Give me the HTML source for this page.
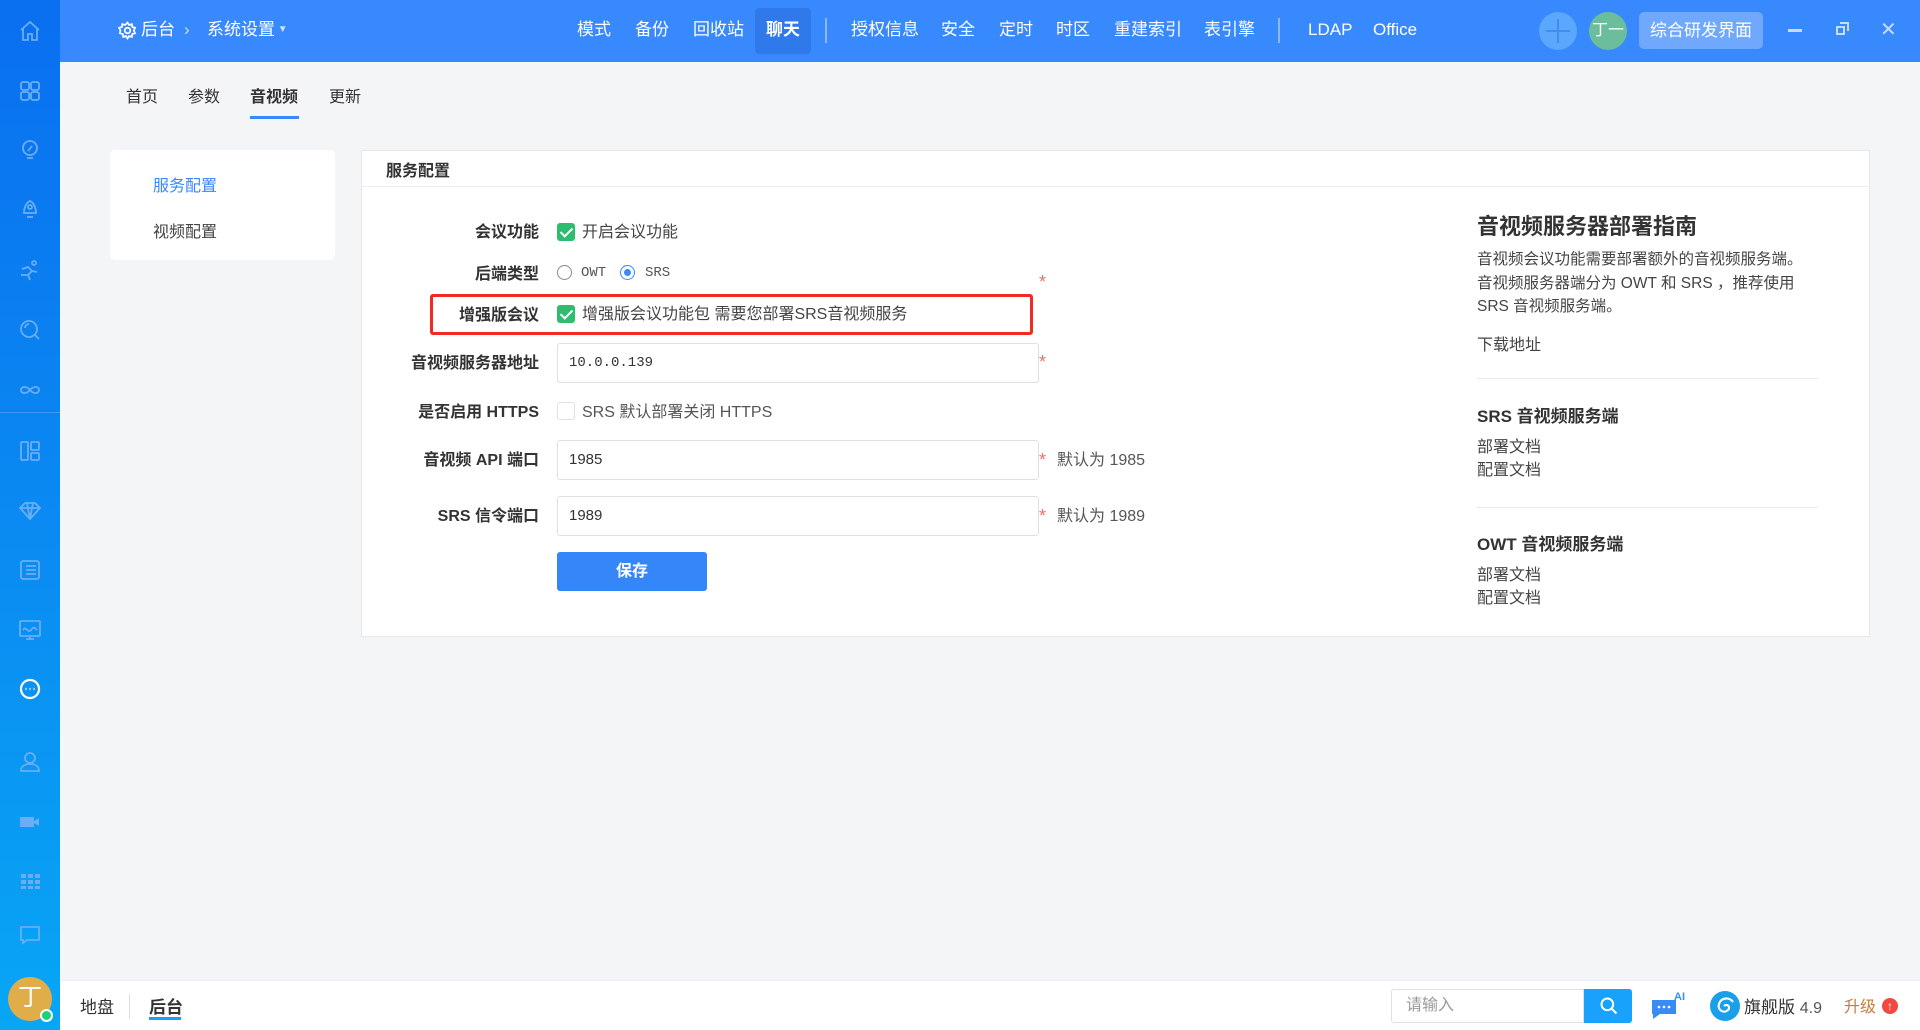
<!DOCTYPE html>
<html><head><meta charset="utf-8"><style>
*{box-sizing:border-box;margin:0;padding:0}
body{width:1920px;height:1030px;overflow:hidden;background:#f4f5f7;font-family:"Liberation Sans","Noto Sans CJK SC",sans-serif;color:#333;position:relative}
.a{position:absolute}
#side{left:0;top:0;width:60px;height:1030px;background:linear-gradient(#0a6ff0,#0a8ff2 60%,#08a6f5)}
#side svg{position:absolute;left:18px;width:24px;height:24px;fill:none;stroke:#6aaef8;stroke-width:1.8}
#hdr{left:60px;top:0;width:1860px;height:62px;background:#3888fe;color:#fff}
.m{position:absolute;top:0;line-height:60px;font-size:17px;color:#fff;white-space:nowrap}
.lbl{position:absolute;right:1381px;font-size:16px;font-weight:bold;color:#333;text-align:right;white-space:nowrap;line-height:20px;margin-top:2px}
.inp{position:absolute;left:557px;width:482px;height:40px;border:1px solid #dcdfe6;border-radius:3px;background:#fff;padding-left:11px;line-height:38px;font-size:15px;color:#333}
.star{position:absolute;left:1039px;color:#f56c6c;font-size:18px}
.cb{position:absolute;left:557px;width:18px;height:18px;border-radius:3px;background:#2ebd6e}
.cb:after{content:"";position:absolute;left:6px;top:2px;width:5px;height:10px;border:solid #fff;border-width:0 2.5px 2.5px 0;transform:rotate(45deg)}
.t{position:absolute;font-size:16px;color:#333;white-space:nowrap}
.f{margin-top:-3px}
.r{position:absolute;left:1477px;font-size:16px;color:#333;white-space:nowrap}
</style></head><body>
<div id="side" class="a">
<svg style="top:19px" viewBox="0 0 24 24"><path d="M3 11L12 3l9 8M5 9v12h5v-6h4v6h5V9"/></svg>
<svg style="top:79px" viewBox="0 0 24 24"><rect x="3" y="3" width="8" height="8" rx="2"/><rect x="13" y="3" width="8" height="8" rx="2"/><rect x="3" y="13" width="8" height="8" rx="2"/><rect x="13" y="13" width="8" height="8" rx="2"/></svg>
<svg style="top:138px" viewBox="0 0 24 24"><circle cx="12" cy="10" r="7"/><path d="M9 20h6M10 13l4-5"/></svg>
<svg style="top:197px" viewBox="0 0 24 24"><path d="M6 16c0-6 3-11 6-12 3 1 6 6 6 12zM9 20h6"/><circle cx="12" cy="10" r="2"/></svg>
<svg style="top:259px" viewBox="0 0 24 24"><circle cx="16" cy="4" r="2"/><path d="M4 10l6-2 4 4-4 4 2 5M3 16h6M14 12l5 1"/></svg>
<svg style="top:318px" viewBox="0 0 24 24"><circle cx="11" cy="11" r="8"/><path d="M17 17l4 4M7 10a4 4 0 0 1 4-4"/></svg>
<svg style="top:378px" viewBox="0 0 24 24"><path d="M12 12c-3-4-9-4-9 0s6 4 9 0 9-4 9 0-6 4-9 0"/></svg>
<div class="a" style="left:0;top:412px;width:60px;height:1px;background:#3f9af4"></div>
<svg style="top:439px" viewBox="0 0 24 24"><rect x="3" y="3" width="7" height="18" rx="1"/><rect x="13" y="3" width="8" height="8" rx="1"/><rect x="13" y="14" width="8" height="7" rx="1"/></svg>
<svg style="top:499px" viewBox="0 0 24 24"><path d="M2 9l5-5h10l5 5-10 11zM2 9h20M9 4l3 16 3-16"/></svg>
<svg style="top:558px" viewBox="0 0 24 24"><rect x="3" y="3" width="18" height="18" rx="2"/><path d="M8 8h10M8 12h10M8 16h10"/></svg>
<svg style="top:618px" viewBox="0 0 24 24"><rect x="2" y="3" width="20" height="15" rx="1"/><path d="M8 21h8M12 18v3M5 12c3-5 5 4 8 0s4-2 6 0"/></svg>
<svg style="top:677px;stroke:#fff;stroke-width:2.2" viewBox="0 0 24 24"><circle cx="12" cy="12" r="9"/><path d="M7.5 12h1M11.5 12h1M15.5 12h1"/></svg>
<svg style="top:750px" viewBox="0 0 24 24"><circle cx="12" cy="8" r="5"/><path d="M3 21c0-5 4-7 9-7s9 2 9 7z"/></svg>
<svg style="top:810px;fill:#6aaef8;stroke:none" viewBox="0 0 24 24"><rect x="2" y="7" width="14" height="10"/><path d="M16 11l5-3v8l-5-3z"/></svg>
<svg style="top:869px;fill:#6aaef8;stroke:none" viewBox="0 0 24 24"><rect x="3" y="5" width="5" height="4"/><rect x="10" y="5" width="5" height="4"/><rect x="17" y="5" width="5" height="4"/><rect x="3" y="11" width="5" height="4"/><rect x="10" y="11" width="5" height="4"/><rect x="17" y="11" width="5" height="4"/><rect x="3" y="17" width="5" height="3"/><rect x="10" y="17" width="5" height="3"/><rect x="17" y="17" width="5" height="3"/></svg>
<svg style="top:923px" viewBox="0 0 24 24"><path d="M3 4h18v13H9l-4 3v-3H3z"/></svg>
<div class="a" style="left:8px;top:977px;width:44px;height:44px;border-radius:50%;background:#e0ad48;color:#fff;font-size:24px;text-align:center;line-height:42px">丁</div>
<div class="a" style="left:40px;top:1009px;width:13px;height:13px;border-radius:50%;background:#19d27a;border:2px solid #fff"></div>
</div>

<div id="hdr" class="a">
<svg class="a" style="left:58px;top:21px" width="19" height="19" viewBox="0 0 24 24" fill="none" stroke="#fff" stroke-width="2.2"><circle cx="12" cy="12" r="3.5"/><path d="M12 2l2 3 3.5-1 .5 3.5 3.5 1-1.5 3.5 1.5 3.5-3.5 1-.5 3.5-3.5-1-2 3-2-3-3.5 1-.5-3.5-3.5-1L3 12 1.5 8.5l3.5-1L5.5 4 9 5z"/></svg>
<div class="m" style="left:81px">后台</div>
<div class="m" style="left:124px;color:#cfe0ff">›</div>
<div class="m" style="left:147px">系统设置<span style="font-size:10px;color:#cfe0ff;vertical-align:3px"> ▼</span></div>
<div class="a" style="left:695px;top:8px;width:56px;height:46px;background:#3079eb;border-radius:4px"></div>
<div class="m" style="left:517px">模式</div>
<div class="m" style="left:575px">备份</div>
<div class="m" style="left:633px">回收站</div>
<div class="m" style="left:706px;font-weight:bold">聊天</div>
<div class="a" style="left:765px;top:18px;width:2px;height:25px;background:#8cb7fb"></div>
<div class="m" style="left:791px">授权信息</div>
<div class="m" style="left:881px">安全</div>
<div class="m" style="left:939px">定时</div>
<div class="m" style="left:996px">时区</div>
<div class="m" style="left:1054px">重建索引</div>
<div class="m" style="left:1144px">表引擎</div>
<div class="a" style="left:1218px;top:18px;width:2px;height:25px;background:#8cb7fb"></div>
<div class="m" style="left:1248px">LDAP</div>
<div class="m" style="left:1313px">Office</div>
<div class="a" style="left:1479px;top:12px;width:38px;height:38px;border-radius:50%;background:#5aa7fd"></div>
<div class="a" style="left:1497px;top:19px;width:2px;height:24px;background:#3e8cf4"></div>
<div class="a" style="left:1486px;top:30px;width:24px;height:2px;background:#3e8cf4"></div>
<div class="a" style="left:1529px;top:12px;width:38px;height:38px;border-radius:50%;background:#6bbd9b;color:#fff;font-size:16px;text-align:center;line-height:38px">丁一</div>
<div class="a" style="left:1579px;top:12px;width:124px;height:37px;border-radius:5px;background:#70a8fd;color:#fff;font-size:17px;text-align:center;line-height:37px">综合研发界面</div>
<div class="a" style="left:1728px;top:29px;width:14px;height:3px;background:#c8dcff"></div>
<div class="a" style="left:1776px;top:26px;width:9px;height:9px;border:2px solid #c8dcff"></div>
<div class="a" style="left:1780px;top:22px;width:9px;height:9px;border-top:2px solid #c8dcff;border-right:2px solid #c8dcff"></div>
<div class="m" style="left:1820px;color:#c8dcff;font-size:20px">✕</div>
</div>

<div class="t" style="left:126px;top:83px">首页</div>
<div class="t" style="left:188px;top:83px">参数</div>
<div class="t" style="left:250px;top:83px;font-weight:bold">音视频</div>
<div class="t" style="left:329px;top:83px">更新</div>
<div class="a" style="left:250px;top:116px;width:49px;height:3px;background:#3888fe"></div>

<div class="a" style="left:110px;top:150px;width:225px;height:110px;background:#fff;border-radius:5px"></div>
<div class="t" style="left:153px;top:172px;color:#3888fe">服务配置</div>
<div class="t" style="left:153px;top:218px;color:#444">视频配置</div>

<div class="a" style="left:361px;top:150px;width:1509px;height:487px;background:#fff;border:1px solid #e6e8eb"></div>
<div class="a" style="left:362px;top:186px;width:1507px;height:1px;background:#ebeef2"></div>
<div class="t" style="left:386px;top:157px;font-weight:bold;font-size:16px">服务配置</div>

<div class="lbl" style="top:221px">会议功能</div>
<div class="cb" style="top:223px"></div>
<div class="t f" style="left:582px;top:221px;color:#444">开启会议功能</div>

<div class="lbl" style="top:263px">后端类型</div>
<div class="a" style="left:557px;top:265px;width:15px;height:15px;border:1px solid #888;border-radius:50%"></div>
<div class="t" style="left:581px;top:265px;font-family:'Liberation Mono',monospace;font-size:14px;color:#555">OWT</div>
<div class="a" style="left:620px;top:265px;width:15px;height:15px;border:1px solid #3888fe;border-radius:50%"></div>
<div class="a" style="left:624px;top:269px;width:7px;height:7px;background:#3888fe;border-radius:50%"></div>
<div class="t" style="left:645px;top:265px;font-family:'Liberation Mono',monospace;font-size:14px;color:#555">SRS</div>
<div class="star" style="top:272px">*</div>

<div class="a" style="left:430px;top:294px;width:603px;height:41px;border:3px solid #f42a22;border-radius:3px"></div>
<div class="lbl" style="top:304px">增强版会议</div>
<div class="cb" style="top:305px"></div>
<div class="t f" style="left:582px;top:303px;color:#444">增强版会议功能包 需要您部署SRS音视频服务</div>

<div class="lbl" style="top:352px">音视频服务器地址</div>
<div class="inp" style="top:343px;font-family:'Liberation Mono',monospace;font-size:14px">10.0.0.139</div>
<div class="star" style="top:352px">*</div>

<div class="lbl" style="top:401px">是否启用 HTTPS</div>
<div class="a" style="left:557px;top:402px;width:18px;height:18px;border:1px solid #dcdfe6;border-radius:3px"></div>
<div class="t f" style="left:582px;top:401px;color:#555">SRS 默认部署关闭 HTTPS</div>

<div class="lbl" style="top:449px">音视频 API 端口</div>
<div class="inp" style="top:440px">1985</div>
<div class="star" style="top:450px">*</div>
<div class="t f" style="left:1057px;top:449px;color:#555">默认为 1985</div>

<div class="lbl" style="top:505px">SRS 信令端口</div>
<div class="inp" style="top:496px">1989</div>
<div class="star" style="top:506px">*</div>
<div class="t f" style="left:1057px;top:505px;color:#555">默认为 1989</div>

<div class="a" style="left:557px;top:552px;width:150px;height:39px;background:#3586f8;border-radius:3px;color:#fff;font-size:16px;font-weight:bold;text-align:center;line-height:39px">保存</div>

<div class="r" style="top:209px;font-size:22px;font-weight:bold;color:#333">音视频服务器部署指南</div>
<div class="r" style="top:248px;line-height:23.5px;color:#444;font-size:15.5px">音视频会议功能需要部署额外的音视频服务端。<br>音视频服务器端分为 OWT 和 SRS ，推荐使用<br>SRS 音视频服务端。</div>
<div class="r" style="top:331px;color:#444">下载地址</div>
<div class="a" style="left:1477px;top:378px;width:341px;height:1px;background:#e8eaee"></div>
<div class="r" style="top:402px;font-weight:bold;font-size:17px">SRS 音视频服务端</div>
<div class="r" style="top:436px;line-height:23px;color:#444">部署文档<br>配置文档</div>
<div class="a" style="left:1477px;top:507px;width:341px;height:1px;background:#e8eaee"></div>
<div class="r" style="top:530px;font-weight:bold;font-size:17px">OWT 音视频服务端</div>
<div class="r" style="top:564px;line-height:23px;color:#444">部署文档<br>配置文档</div>

<div class="a" style="left:60px;top:980px;width:1860px;height:50px;background:#fff;border-top:1px solid #eceef1"></div>
<div class="t" style="left:80px;top:993px;font-size:17px">地盘</div>
<div class="a" style="left:129px;top:994px;width:1px;height:25px;background:#ddd"></div>
<div class="t" style="left:149px;top:993px;font-size:17px;font-weight:bold">后台</div>
<div class="a" style="left:149px;top:1017px;width:32px;height:3px;background:#16a1f5"></div>

<div class="a" style="left:1391px;top:989px;width:193px;height:34px;border:1px solid #dcdfe6;border-radius:3px 0 0 3px;background:#fff;color:#999;font-size:16px;padding-left:14px;line-height:32px">请输入</div>
<div class="a" style="left:1584px;top:989px;width:48px;height:34px;background:#19a2fb;border-radius:0 3px 3px 0"></div>
<svg class="a" style="left:1599px;top:996px" width="20" height="20" viewBox="0 0 24 24" fill="none" stroke="#fff" stroke-width="2.4"><circle cx="10" cy="10" r="7"/><path d="M15 15l6 6"/></svg>
<svg class="a" style="left:1650px;top:990px" width="36" height="32" viewBox="0 0 36 32"><path d="M2 10h24v14H10l-7 5v-5H2z" fill="#3a8cf5"/><circle cx="9" cy="17" r="1.3" fill="#fff"/><circle cx="14" cy="17" r="1.3" fill="#fff"/><circle cx="19" cy="17" r="1.3" fill="#fff"/><text x="24" y="10" font-size="11" font-weight="bold" fill="#3a8cf5" font-family="Liberation Sans">AI</text></svg>
<div class="a" style="left:1710px;top:991px;width:30px;height:30px;border-radius:50%;background:#1aa0ea"></div>
<svg class="a" style="left:1713px;top:994px" width="24" height="24" viewBox="0 0 24 24" fill="none" stroke="#fff" stroke-width="2.2"><path d="M20 8c-3-5-12-5-14 2-2 6 5 10 9 6 3-3-1-7-4-4"/></svg>
<div class="t" style="left:1744px;top:993px;font-size:17px;color:#333">旗舰版 <span style="color:#555;font-size:16px">4.9</span></div>
<div class="t" style="left:1844px;top:993px;font-size:16px;color:#c47d3d">升级</div>
<div class="a" style="left:1882px;top:998px;width:16px;height:16px;border-radius:50%;background:#f2483f;color:#fff;font-size:12px;font-weight:bold;text-align:center;line-height:16px">↑</div>
</body></html>
